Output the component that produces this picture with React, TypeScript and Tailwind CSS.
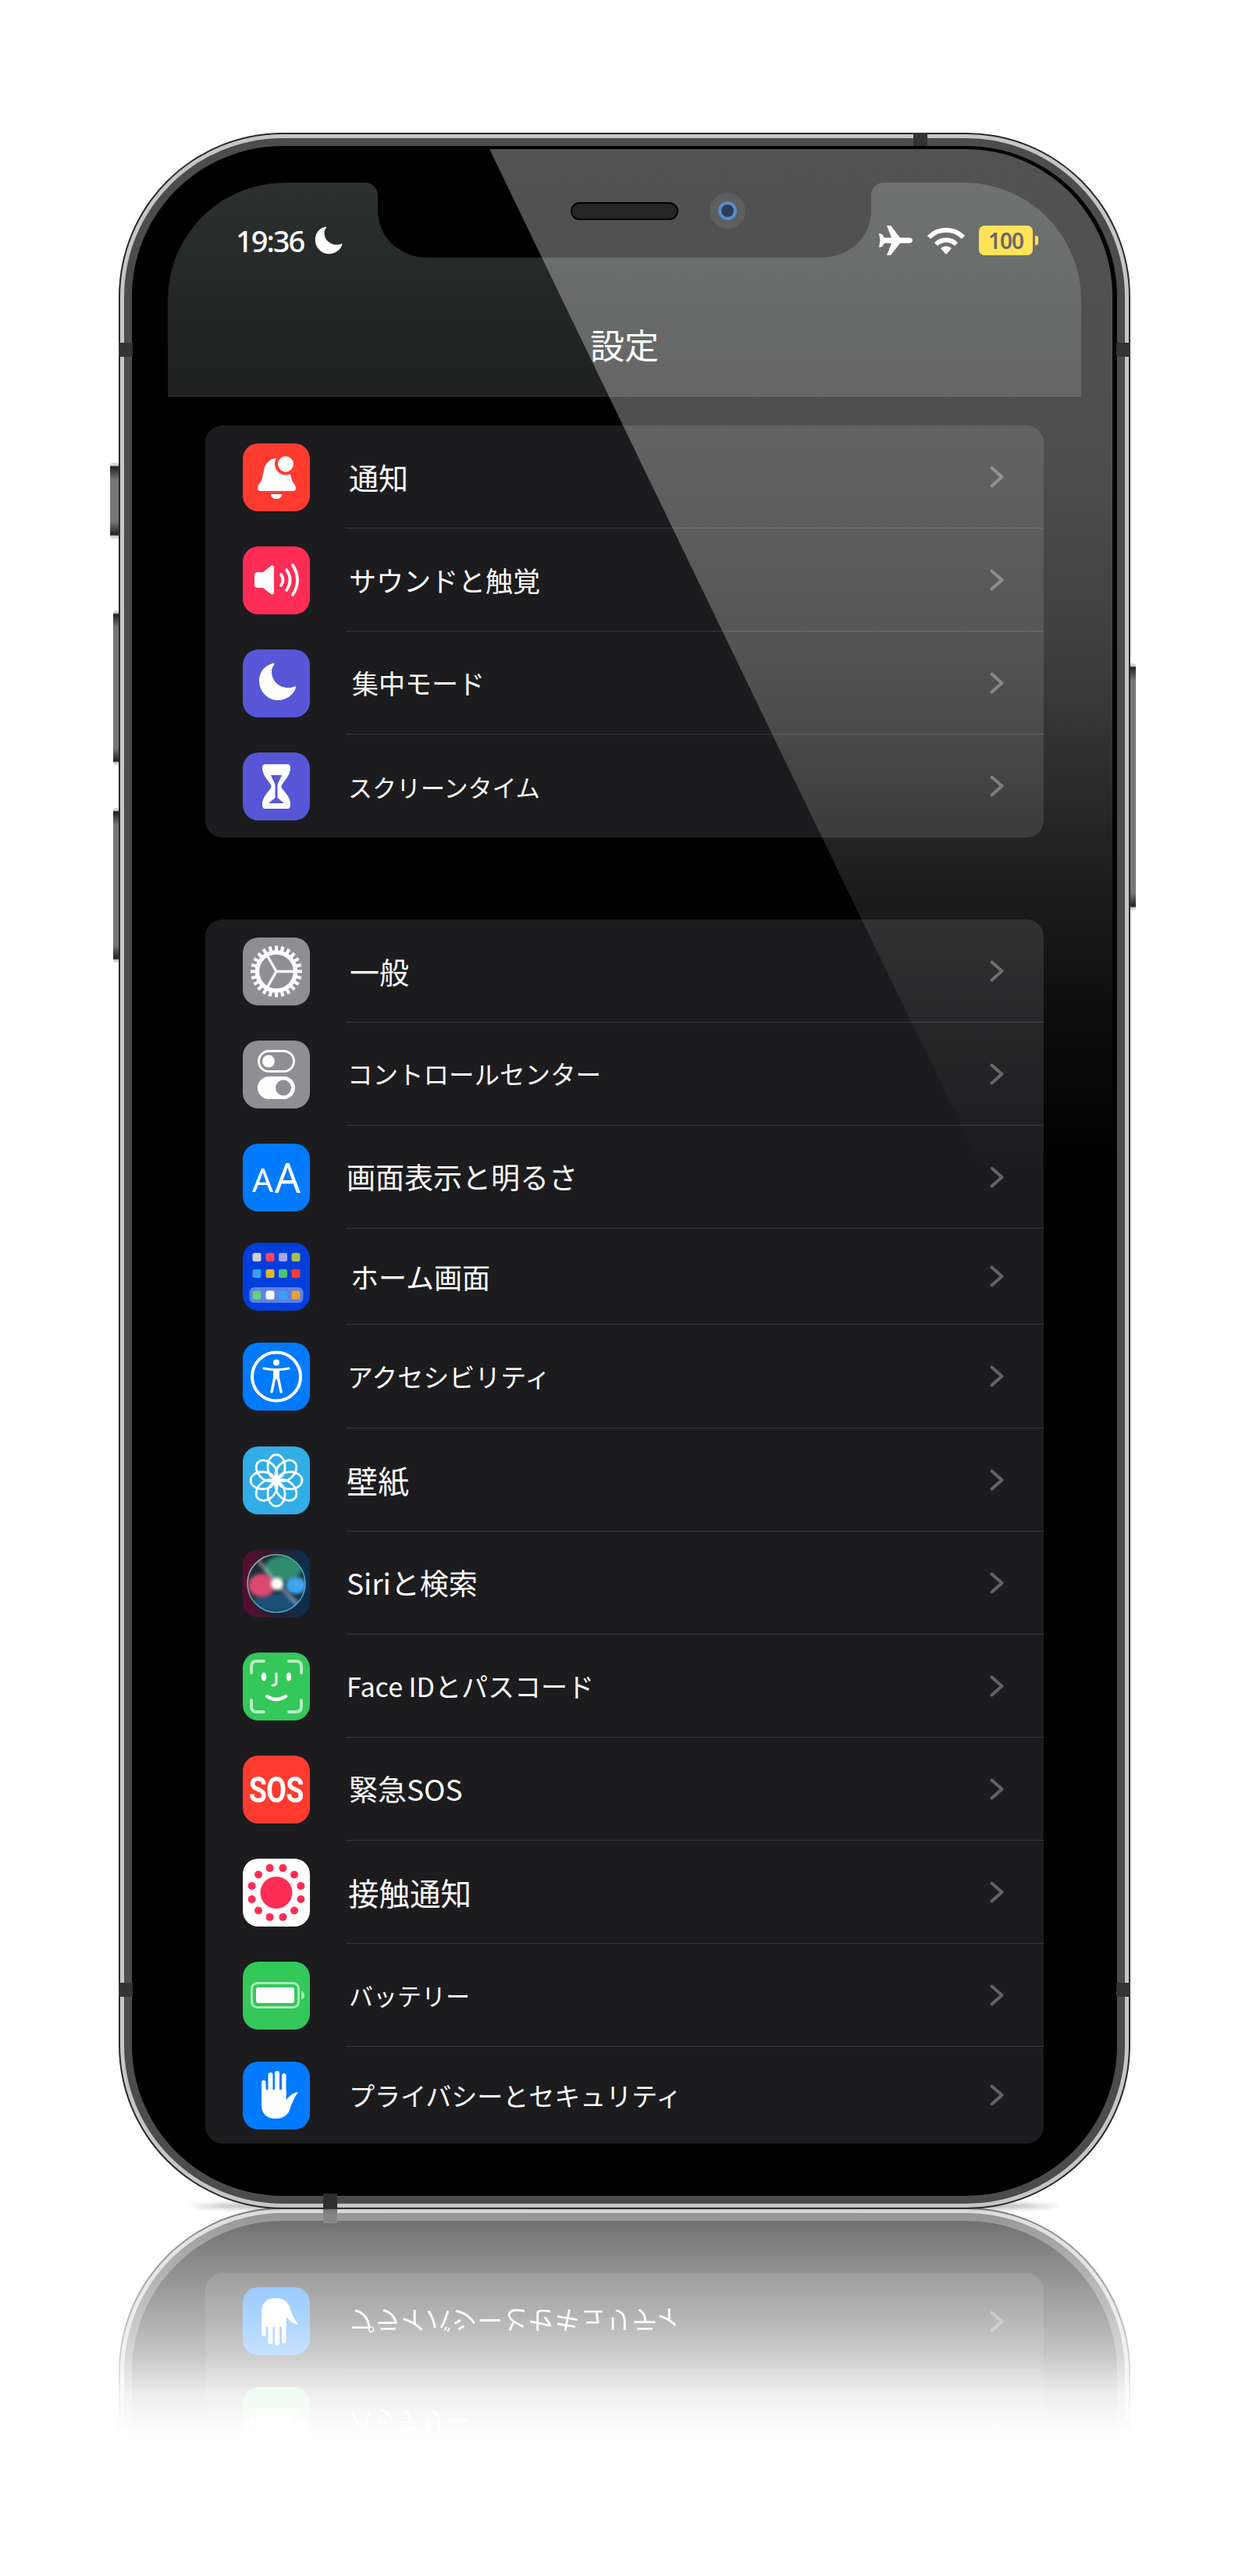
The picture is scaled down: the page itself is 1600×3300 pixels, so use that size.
import React from "react";

const W = "#fff";

function BellIcon() {
  return (
    <>
      <path fill={W} d="M43 19C36 19 29 25 27 34L25 44C24 50 19 53 19 57C19 60 21 61 23 61L64 61C67 61 68 59 68 57C68 53 63 50 62 44L60 34C58 25 50 19 43 19Z" />
      <path fill={W} d="M36 65L50 65C50 69 47 71 43 71C39 71 36 69 36 65Z" />
      <circle cx="55" cy="26.5" r="14" fill="#ff3b30" />
      <circle cx="55" cy="26.5" r="10" fill={W} />
    </>
  );
}
function SoundIcon() {
  return (
    <>
      <path fill={W} d="M19 33L26 33L36 25C38 24 40 25 40 27L40 59C40 61 38 62 36 61L26 53L19 53C16 53 15 51 15 49L15 37C15 35 16 33 19 33Z" />
      <g fill="none" stroke={W} strokeWidth="3.8" strokeLinecap="round">
        <path d="M49 36Q54 43 49 50" />
        <path d="M56 30Q65 43 56 56" />
        <path d="M64 24Q76 43 64 62" />
      </g>
    </>
  );
}
const MOON = "M38 18C26 21 21 31 21 40C21 54 32 65 45 65C56 65 65 58 68 49C68 47 67 47 65 48C62 49 60 49 58 49C46 49 37 40 37 28C37 25 38 22 40 20C41 18 40 17 38 18Z";
function MoonIcon() {
  return <path fill={W} d={MOON} />;
}
function HourglassIcon() {
  return (
    <>
      <path fill={W} d="M29 15L57 15C60 15 61 17 61 20C61 28 55 34 51 40C49 43 49 44 51 47C55 52 61 58 61 66C61 70 60 72 57 72L29 72C26 72 25 70 25 66C25 58 31 52 35 47C37 44 37 43 35 40C31 34 25 28 25 20C25 17 26 15 29 15Z" />
      <path fill="#5856d6" d="M36 29L50 29C48 35 44.500 38 44.500 43L44.500 58L53 65L33 65L41.500 58L41.500 43C41.500 38 38 35 36 29Z" />
    </>
  );
}
function GearIcon() {
  const teeth = Array.from({ length: 24 }, (_, i) => (i * 15 * Math.PI) / 180);
  return (
    <g stroke={W} fill="none">
      {teeth.map((a, i) => (
        <line key={i} x1={43 + 24 * Math.cos(a)} y1={43.5 + 24 * Math.sin(a)} x2={43 + 33 * Math.cos(a)} y2={43.5 + 33 * Math.sin(a)} strokeWidth="4.2" />
      ))}
      <circle cx="43" cy="43.500" r="24.500" strokeWidth="5.5" />
      <path d="M43 43.500L67 43.500M43 43.500L31 22.500M43 43.500L31 64.500" strokeWidth="3.4" />
    </g>
  );
}
function SwitchIcon() {
  return (
    <>
      <rect x="20.500" y="13.500" width="45" height="26" rx="13" fill="none" stroke={W} strokeWidth="3" />
      <circle cx="33" cy="26.500" r="8" fill={W} />
      <rect x="19" y="46" width="48" height="29" rx="14.500" fill={W} />
      <circle cx="52" cy="60.500" r="10" fill="#8e8e93" />
    </>
  );
}
function HomeIcon() {
  const rows: [number, string[]][] = [
    [18.5, ["#d1d1d1", "#ff4560", "#a3a6ee", "#a9bf45"]],
    [39.5, ["#3a9cf5", "#e4b62e", "#50c272", "#ff3b30"]],
    [67, ["#5fd37a", "#ffffff", "#3a9ff5", "#e5a03f"]],
  ];
  const xs = [18, 35, 51.5, 68];
  return (
    <>
      <rect x="8.500" y="57" width="69" height="20" rx="6" fill="#5d80e6" />
      {rows.map(([y, colors]) =>
        colors.map((c, i) => <rect key={`${y}-${i}`} x={xs[i] - 5.5} y={y - 5.5} width="11" height="11" rx="2.500" fill={c} />)
      )}
    </>
  );
}
function AccessIcon() {
  return (
    <>
      <circle cx="43" cy="43.500" r="31" fill="none" stroke={W} strokeWidth="4" />
      <circle cx="43" cy="25.500" r="4" fill={W} />
      <g fill="none" stroke={W} strokeLinecap="round">
        <path d="M27 33Q43 36.500 59 33" strokeWidth="3.200" />
        <path d="M43 35L43 47" strokeWidth="8" strokeLinecap="butt" />
        <path d="M40.500 46L37 63M45.500 46L49 63" strokeWidth="3.500" />
      </g>
    </>
  );
}
function FlowerIcon() {
  const angles = [0, 45, 90, 135, 180, 225, 270, 315];
  return (
    <g fill="none" stroke={W} strokeWidth="2.800">
      {angles.map((a) => (
        <ellipse key={a} cx="43" cy="26" rx="11" ry="15.500" transform={`rotate(${a} 43 43.500)`} />
      ))}
      <circle cx="43" cy="43.500" r="4.500" fill={W} stroke="none" />
    </g>
  );
}
function SiriIcon() {
  return (
    <>
      <defs>
        <linearGradient id="siriBg" x1="0" x2="1" y1="0" y2="0">
          <stop offset="0" stopColor="#5f0a33" />
          <stop offset="0.5" stopColor="#26202f" />
          <stop offset="1" stopColor="#0b2f52" />
        </linearGradient>
        <linearGradient id="siriRing" x1="0" x2="1" y1="0" y2="1">
          <stop offset="0" stopColor="#d9a0a8" />
          <stop offset="0.4" stopColor="#40b28c" />
          <stop offset="1" stopColor="#38a0e8" />
        </linearGradient>
        <clipPath id="siriClip">
          <circle cx="43" cy="43.500" r="37" />
        </clipPath>
        <filter id="siriBlur" x="-30%" y="-30%" width="160%" height="160%">
          <feGaussianBlur stdDeviation="2" />
        </filter>
      </defs>
      <rect width="86" height="87" fill="url(#siriBg)" />
      <circle cx="43" cy="43.500" r="37" fill="#1b2e38" />
      <g clipPath="url(#siriClip)">
        <ellipse cx="52" cy="24" rx="24" ry="16" fill="#2f8b6e" filter="url(#siriBlur)" />
        <ellipse cx="42" cy="68" rx="30" ry="12" fill="#1d4f78" filter="url(#siriBlur)" />
        <ellipse cx="24" cy="46" rx="17" ry="15" fill="#d94a70" filter="url(#siriBlur)" />
        <ellipse cx="68" cy="46" rx="13" ry="11" fill="#3fa4ee" filter="url(#siriBlur)" />
        <path d="M20 14L44 44L72 72" stroke="#b8c0c0" strokeWidth="5" fill="none" opacity="0.55" filter="url(#siriBlur)" />
        <circle cx="44" cy="44" r="8" fill={W} filter="url(#siriBlur)" />
      </g>
      <circle cx="43" cy="43.500" r="37" fill="none" stroke="url(#siriRing)" strokeWidth="1.600" />
    </>
  );
}
function FaceIdIcon() {
  return (
    <>
      <g fill="none" stroke="#b5ecc3" strokeWidth="4" strokeLinecap="round">
        <path d="M11 26L11 18Q11 11 18 11L27 11" />
        <path d="M59 11L68 11Q75 11 75 18L75 26" />
        <path d="M11 61L11 69Q11 76 18 76L27 76" />
        <path d="M59 76L68 76Q75 76 75 69L75 61" />
      </g>
      <ellipse cx="27" cy="31" rx="3.200" ry="5.500" fill={W} />
      <ellipse cx="59" cy="31" rx="3.200" ry="5.500" fill={W} />
      <g fill="none" stroke={W} strokeLinecap="round">
        <path d="M43 27L43 38Q43 42 38 42" strokeWidth="3" />
        <path d="M31 56Q43 64 55 56" strokeWidth="4.500" />
      </g>
    </>
  );
}
function ExposureIcon() {
  const angles = Array.from({ length: 12 }, (_, i) => ((15 + i * 30) * Math.PI) / 180);
  return (
    <g fill="#ff2d55">
      <circle cx="43" cy="43.500" r="20.500" />
      {angles.map((a, i) => (
        <circle key={i} cx={43 + 32.5 * Math.cos(a)} cy={43.5 + 32.5 * Math.sin(a)} r="5" />
      ))}
    </g>
  );
}
function BatteryIcon() {
  return (
    <>
      <rect x="11.500" y="27.500" width="60" height="31" rx="7" fill="none" stroke="#a9e8b9" strokeWidth="3" />
      <rect x="17" y="33" width="49" height="20" rx="3" fill={W} />
      <path d="M75 37L79 41L79 45L75 49Z" fill="#a9e8b9" />
    </>
  );
}
function HandIcon() {
  return (
    <g fill={W}>
      <rect x="24" y="24" width="5.500" height="24" rx="2.750" />
      <rect x="32.500" y="14" width="6" height="30" rx="3" />
      <rect x="41" y="12" width="6" height="32" rx="3" />
      <rect x="50" y="15" width="5.500" height="30" rx="2.750" />
      <path d="M24 34L29.500 34L29.500 36L32.500 36L38.500 36L41 36L47 36L50 36L55.500 36L55.500 49C60 44 64 40 71 39C66 46 62 54 60 62C57 70 50 73 42 73C30 73 24 66 24 56Z" />
    </g>
  );
}

type IconDef = { bg: string; node: React.ReactNode };
const I: Record<string, IconDef> = {
  bell: { bg: "bg-[#ff3b30]", node: <BellIcon /> },
  sound: { bg: "bg-[#ff2d55]", node: <SoundIcon /> },
  focus: { bg: "bg-[#5856d6]", node: <MoonIcon /> },
  time: { bg: "bg-[#5856d6]", node: <HourglassIcon /> },
  gear: { bg: "bg-[#8e8e93]", node: <GearIcon /> },
  ctrl: { bg: "bg-[#8e8e93]", node: <SwitchIcon /> },
  home: { bg: "bg-[#003fdd]", node: <HomeIcon /> },
  access: { bg: "bg-[#007aff]", node: <AccessIcon /> },
  wall: { bg: "bg-[#32ade6]", node: <FlowerIcon /> },
  siri: { bg: "bg-[#1c1c1e]", node: <SiriIcon /> },
  face: { bg: "bg-[#34c759]", node: <FaceIdIcon /> },
  expo: { bg: "bg-white", node: <ExposureIcon /> },
  batt: { bg: "bg-[#34c759]", node: <BatteryIcon /> },
  hand: { bg: "bg-[#007aff]", node: <HandIcon /> },
};

function Tile({ k }: { k: string }) {
  if (k === "aa") {
    return (
      <div className="w-[86px] h-[87px] shrink-0 rounded-[20px] bg-[#007aff] flex items-center justify-center text-white font-['Noto_Sans'] leading-none gap-[2px]">
        <span className="text-[42px] mt-[5px]">A</span>
        <span className="text-[52px]">A</span>
      </div>
    );
  }
  if (k === "sos") {
    return (
      <div className="w-[86px] h-[87px] shrink-0 rounded-[20px] bg-[#ff3b30] flex items-center justify-center text-white font-['Roboto'] font-bold">
        <span className="text-[47px] leading-none scale-x-[0.8] tracking-[-1px]">SOS</span>
      </div>
    );
  }
  const d = I[k];
  return (
    <div className={`w-[86px] h-[87px] shrink-0 rounded-[20px] overflow-hidden ${d.bg}`}>
      <svg viewBox="0 0 86 87" className="w-full h-full block">
        {d.node}
      </svg>
    </div>
  );
}

function Chevron() {
  return (
    <svg viewBox="0 0 19 28" className="w-[19px] h-[28px] shrink-0">
      <path d="M2.500 2.500L15.500 14L2.500 25.500" fill="none" stroke="#636366" strokeWidth="4" strokeLinecap="round" strokeLinejoin="round" />
    </svg>
  );
}

type RowDef = { k: string; t: string; h: string; size: string; pl: string; last?: boolean };

const group1: RowDef[] = [
  { k: "bell", t: "通知", h: "h-[132px]", size: "text-[38px]", pl: "pl-[4px]" },
  { k: "sound", t: "サウンドと触覚", h: "h-[132px]", size: "text-[35px]", pl: "pl-[4px]" },
  { k: "focus", t: "集中モード", h: "h-[132px]", size: "text-[34px]", pl: "pl-[8px]" },
  { k: "time", t: "スクリーンタイム", h: "h-[132px]", size: "text-[31px]", pl: "pl-[3px]", last: true },
];
const group2: RowDef[] = [
  { k: "gear", t: "一般", h: "h-[132px]", size: "text-[38px]", pl: "pl-[5px]" },
  { k: "ctrl", t: "コントロールセンター", h: "h-[132px]", size: "text-[32.5px]", pl: "pl-[2px]" },
  { k: "aa", t: "画面表示と明るさ", h: "h-[132px]", size: "text-[37px]", pl: "pl-[1px]" },
  { k: "home", t: "ホーム画面", h: "h-[123px]", size: "text-[36px]", pl: "pl-[6px]" },
  { k: "access", t: "アクセシビリティ", h: "h-[133px]", size: "text-[33px]", pl: "pl-[2px]" },
  { k: "wall", t: "壁紙", h: "h-[132px]", size: "text-[40px]", pl: "pl-[1px]" },
  { k: "siri", t: "Siriと検索", h: "h-[132px]", size: "text-[37px]", pl: "pl-[1px]" },
  { k: "face", t: "Face IDとパスコード", h: "h-[132px]", size: "text-[34px]", pl: "pl-[1px]" },
  { k: "sos", t: "緊急SOS", h: "h-[132px]", size: "text-[37px]", pl: "pl-[4px]" },
  { k: "expo", t: "接触通知", h: "h-[132px]", size: "text-[39.5px]", pl: "pl-[3px]" },
  { k: "batt", t: "バッテリー", h: "h-[132px]", size: "text-[31px]", pl: "pl-[4px]" },
  { k: "hand", t: "プライバシーとセキュリティ", h: "h-[124px]", size: "text-[33px]", pl: "pl-[4px]", last: true },
];

function Row({ r }: { r: RowDef }) {
  return (
    <div className={`flex items-center pl-[48px] ${r.h}`}>
      <Tile k={r.k} />
      <div className={`flex-1 h-full ml-[46px] flex items-center justify-between pr-[50px] ${r.last ? "" : "border-b border-[#3a3a3c]"}`}>
        <span className={`text-white font-normal whitespace-nowrap leading-none ${r.size} ${r.pl}`}>{r.t}</span>
        <Chevron />
      </div>
    </div>
  );
}

function Card({ rows }: { rows: RowDef[] }) {
  return (
    <div className="mx-[94px] bg-[#1c1c1e] rounded-[22px]">
      {rows.map((r) => (
        <Row key={r.t} r={r} />
      ))}
    </div>
  );
}

function Shell({ children, className }: { children: React.ReactNode; className: string }) {
  return (
    <div className={`relative w-[1296px] rounded-[210px] bg-[#2a2a2a] p-[2px] ${className}`}>
      <div className="h-full rounded-[208px] bg-[#c6c6c6] p-[5px]">
        <div className="h-full rounded-[203px] bg-[#4c4c4c] p-[10px]">
          <div className="relative h-full rounded-[193px] bg-black overflow-hidden">{children}</div>
        </div>
      </div>
      <div className="absolute left-0 bottom-[272px] w-[18px] h-[18px] bg-[#333]" />
      <div className="absolute right-0 bottom-[272px] w-[18px] h-[18px] bg-[#333]" />
      <div className="absolute left-[262px] bottom-0 w-[18px] h-[20px] bg-[#2e2e2e]" />
    </div>
  );
}

function SideButton({ className }: { className: string }) {
  return (
    <div className={`absolute rounded-l-[3px] bg-[linear-gradient(to_bottom,#d8d8d8_0,#d8d8d8_3px,#222_5px,#777_22px,#777_calc(100%-22px),#222_calc(100%-5px),#d8d8d8_calc(100%-3px),#d8d8d8_100%)] ${className}`} />
  );
}

function StatusBar() {
  return (
    <div className="relative mx-[46px] h-[274px] rounded-t-[150px] bg-[linear-gradient(to_bottom,#2c302f,#1e1f1f)] border-b border-[#343534]">
      <svg viewBox="0 0 664 96" className="absolute left-[253px] top-0 w-[664px] h-[96px]">
        <path fill="#000" d="M0 0C9 0 16 7 16 16L16 35C16 70 44 96 80 96L584 96C620 96 648 70 648 35L648 16C648 7 655 0 664 0Z" />
      </svg>
      <div className="flex items-center justify-between pl-[87px] pr-[55px] pt-[55px]">
        <div className="flex items-center gap-[14px] text-white">
          <span className="font-['Noto_Sans'] font-medium text-[38px] leading-[38px] tracking-[-2px]">19:36</span>
          <svg viewBox="20 17 49 49" className="w-[36px] h-[36px]">
            <path fill="#fff" d={MOON} />
          </svg>
        </div>
        <div className="flex items-center">
          <svg viewBox="0 0 44 38" className="w-[44px] h-[38px]">
            <path fill="#fff" d="M44 19C44 16 41 15.500 38 15.500L28 15.500L16 0L11 0L17 15.500L8 15.500L5 11L1 10L2.500 19L1 28L5 27L8 22.500L17 22.500L11 38L16 38L28 22.500L38 22.500C41 22.500 44 22 44 19Z" />
          </svg>
          <svg viewBox="0 0 50 36" className="w-[50px] h-[36px] ml-[18px]">
            <g fill="none" stroke="#fff" strokeWidth="6">
              <path d="M3 14A31 31 0 0 1 47 14" />
              <path d="M12 23A18 18 0 0 1 38 23" />
            </g>
            <path fill="#fff" d="M25 36L18 28A10 10 0 0 1 32 28Z" />
          </svg>
          <div className="ml-[17px] w-[69px] h-[38px] rounded-[7px] bg-[#ffd60a] flex items-center justify-center text-[#222] font-['Noto_Sans'] font-semibold text-[28px] leading-none tracking-[-1px]">
            100
          </div>
          <div className="ml-[3px] w-[4px] h-[12px] rounded-r-[3px] bg-[#ffd60a]" />
        </div>
      </div>
      <div className="mt-[89px] text-center text-white text-[44px] leading-[50px] font-normal">設定</div>
      <div className="absolute left-[516px] top-[25px] w-[138px] h-[23px] rounded-full bg-[#262626] border-[2px] border-black z-20" />
      <div className="absolute left-[694px] top-[13px] w-[46px] h-[46px] rounded-full bg-[#5c5e60] flex items-center justify-center z-20">
        <div className="w-[24px] h-[24px] rounded-full bg-[#2c3e55] border-[4px] border-[#5e8acb]" />
      </div>
    </div>
  );
}

function Glare() {
  return (
    <div className="absolute left-[4px] top-[4px] right-[6px] h-[1310px] rounded-tr-[188px] overflow-hidden z-10 pointer-events-none">
      <div className="w-full h-full [clip-path:polygon(454px_0,100%_0,100%_1310px,1087px_1310px)] bg-[linear-gradient(to_bottom,rgba(255,255,255,0.32)_0,rgba(255,255,255,0.31)_29%,rgba(255,255,255,0.25)_48%,rgba(255,255,255,0.22)_54%,rgba(255,255,255,0.13)_69%,rgba(255,255,255,0.05)_85%,rgba(255,255,255,0)_100%)]" />
    </div>
  );
}

export default function App() {
  return (
    <div className="relative w-full h-[3300px] bg-white overflow-hidden pt-[170px] font-['Noto_Sans_CJK_JP',sans-serif]">
      <div className="absolute left-[245px] top-[2823px] w-[1110px] h-[6px] rounded-[50%] bg-black/60 blur-[3px]" />
      <div className="relative ml-[152px] w-[1296px] h-[2660px]">
        <SideButton className="left-[-11px] top-[423px] w-[11px] h-[97px]" />
        <SideButton className="left-[-7px] top-[612px] w-[7px] h-[198px]" />
        <SideButton className="left-[-7px] top-[865px] w-[7px] h-[198px]" />
        <div className="absolute right-[-7px] top-[680px] w-[7px] h-[316px] rounded-r-[3px] bg-[linear-gradient(to_bottom,#d8d8d8_0,#d8d8d8_3px,#222_5px,#777_22px,#777_calc(100%-22px),#222_calc(100%-5px),#d8d8d8_calc(100%-3px),#d8d8d8_100%)]" />
        <Shell className="h-[2660px]">
          <div className="pt-[47px]">
            <StatusBar />
            <div className="mt-[37px] flex flex-col gap-[105px]">
              <Card rows={group1} />
              <Card rows={group2} />
            </div>
          </div>
          <Glare />
        </Shell>
        <div className="absolute left-0 top-[269px] w-[18px] h-[18px] bg-[#333]" />
        <div className="absolute right-0 top-[269px] w-[18px] h-[18px] bg-[#333]" />
        <div className="absolute left-[1018px] top-0 w-[18px] h-[17px] bg-[#333]" />
      </div>
      <div className="relative ml-[152px] w-[1296px] h-[295px] mt-[-2px] [mask-image:linear-gradient(to_bottom,rgba(0,0,0,0.62)_0,rgba(0,0,0,0.54)_25px,rgba(0,0,0,0.45)_72px,rgba(0,0,0,0.33)_139px,rgba(0,0,0,0.22)_189px,rgba(0,0,0,0.07)_239px,rgba(0,0,0,0.025)_272px,rgba(0,0,0,0)_295px)]">
        <div className="h-[295px] overflow-hidden -scale-y-100 flex flex-col justify-end">
          <Shell className="h-[700px] shrink-0">
            <div className="h-full flex flex-col justify-end pb-[67px]">
              <Card rows={group2.slice(-2)} />
            </div>
          </Shell>
        </div>
      </div>
    </div>
  );
}
